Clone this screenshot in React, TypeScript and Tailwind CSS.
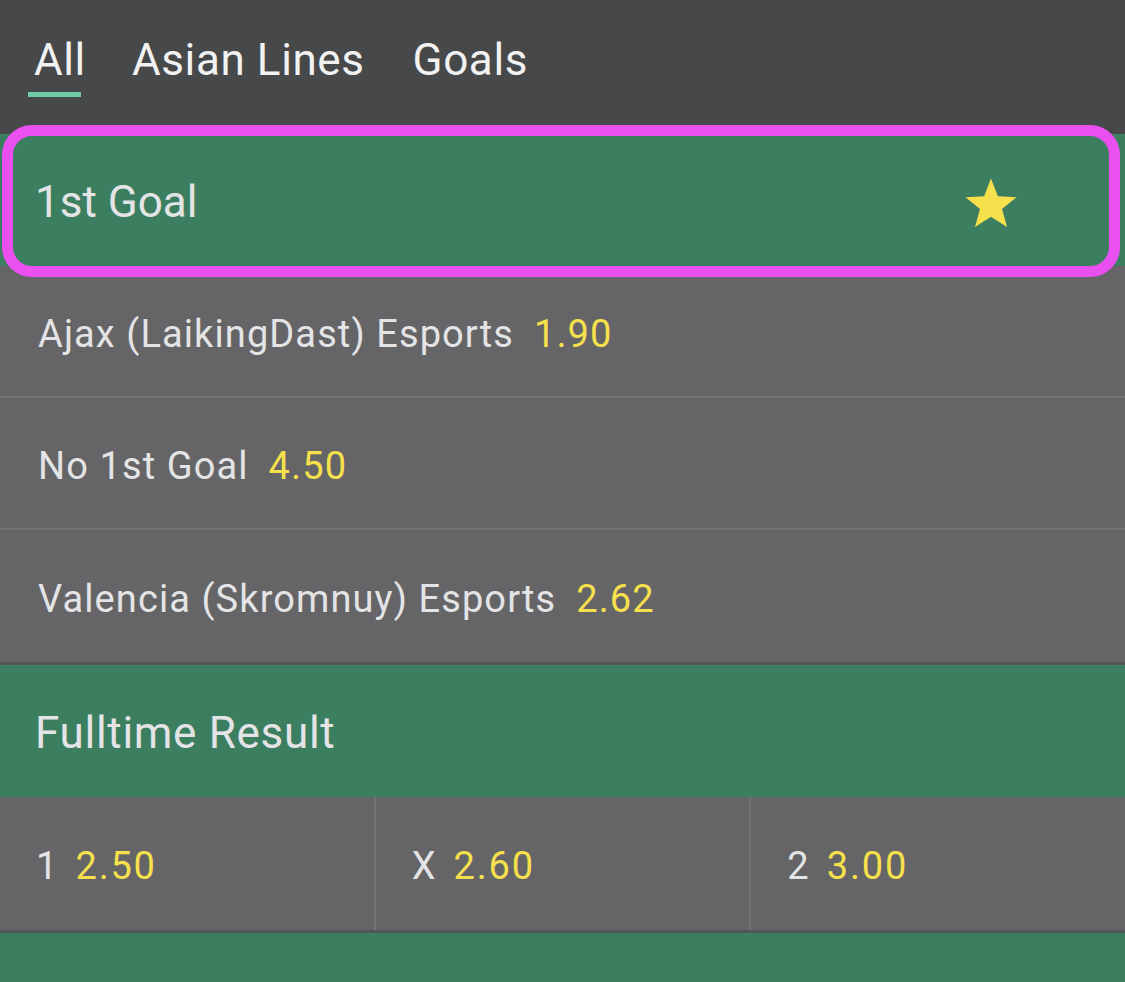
import React from "react";

const font = { fontFamily: "Roboto, 'Noto Sans', sans-serif" };

function Star() {
  return (
    <svg width="62" height="60" viewBox="0 0 24 24" className="blur-[0.6px] mt-[6px]">
      <path
        d="M12 2.2l2.75 7.1 7.45.35-5.8 4.7 2 7.25L12 17.5l-6.4 4.1 2-7.25-5.8-4.7 7.45-.35z"
        fill="#f6e04c"
      />
    </svg>
  );
}

function Row({ label, odds, last }: { label: string; odds: string; last?: boolean }) {
  return (
    <div
      className={
        "h-[132px] flex items-center pl-[38px] pt-[6px] bg-[#656567] " +
        (last ? "" : "border-b-2 border-[#727274]")
      }
    >
      <span className="text-[#e4e4e6] text-[38px] tracking-[1.1px]">{label}</span>
      <span className="text-[#f6e04c] text-[38px] tracking-[1.1px] ml-[20px]">{odds}</span>
    </div>
  );
}

function Cell({ label, odds, last }: { label: string; odds: string; last?: boolean }) {
  return (
    <div
      className={
        "flex-1 flex items-center pl-[36px] pt-[6px] " + (last ? "" : "border-r-2 border-[#747476]")
      }
    >
      <span className="text-[#e4e4e6] text-[38px] tracking-[1.1px]">{label}</span>
      <span className="text-[#f6e04c] text-[38px] tracking-[1.8px] ml-[17px]">{odds}</span>
    </div>
  );
}

export default function App() {
  return (
    <div className="w-[1125px] h-[982px] overflow-hidden bg-[#656567] relative" style={font}>
      {/* Tabs */}
      <div className="h-[134px] bg-[#47484a] flex items-start pl-[28px] pt-[34px]">
        <div className="flex flex-col w-[53px]">
          <span className="text-[#f2f2f2] text-[44px] leading-[52px] tracking-[0.6px] ml-[6px]">All</span>
          <div className="mt-[6px] h-[5px] w-[53px] bg-[#6fcca7]" />
        </div>
        <span className="text-[#f2f2f2] text-[44px] leading-[52px] tracking-[0.6px] ml-[51px]">Asian Lines</span>
        <span className="text-[#f2f2f2] text-[44px] leading-[52px] tracking-[0.6px] ml-[48px]">Goals</span>
      </div>

      {/* 1st Goal header */}
      <div className="h-[132px] bg-[#3c7f60] flex items-center pl-[35px] pr-[103px] justify-between">
        <span className="text-[#e4e4e6] text-[44px] pt-[3px]">1st Goal</span>
        <Star />
      </div>

      <Row label="Ajax (LaikingDast) Esports" odds="1.90" />
      <Row label="No 1st Goal" odds="4.50" />
      <Row label="Valencia (Skromnuy) Esports" odds="2.62" last />

      <div className="h-[3px] bg-[#555557]" />

      {/* Fulltime result */}
      <div className="h-[132px] bg-[#3c7f60] flex items-center pl-[35px] pt-[4px]">
        <span className="text-[#e4e4e6] text-[44px] tracking-[0.7px]">Fulltime Result</span>
      </div>

      <div className="h-[133px] flex bg-[#656567]">
        <Cell label="1" odds="2.50" />
        <Cell label="X" odds="2.60" />
        <Cell label="2" odds="3.00" last />
      </div>
      <div className="h-[3px] bg-[#555557]" />
      <div className="h-[60px] bg-[#3c7f60]" />

      {/* highlight */}
      <div className="absolute left-[2px] top-[125px] w-[1118px] h-[152px] border-[11px] border-[#ea4ff0] rounded-[30px] pointer-events-none" />
    </div>
  );
}
